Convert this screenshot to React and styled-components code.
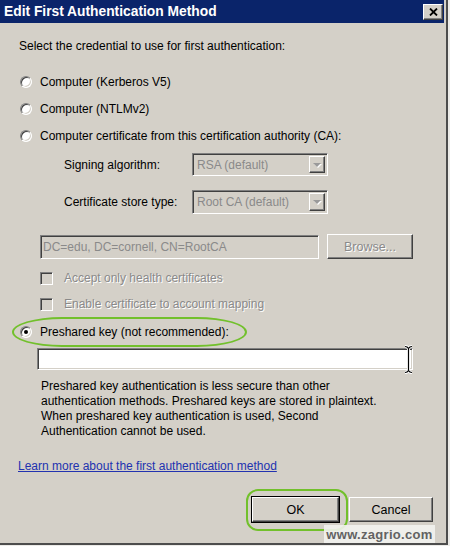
import styled, { createGlobalStyle, css } from "styled-components";

const GlobalStyle = createGlobalStyle`
  html, body {
    margin: 0;
    padding: 0;
    background: #ecebe8;
  }
  body {
    font-family: "Liberation Sans", Arial, sans-serif;
    font-size: 12px;
    color: #000;
  }
`;

const raised = css`
  background: #d4d0c8;
  border: 1px solid;
  border-color: #fff #404040 #404040 #fff;
  box-shadow: inset -1px -1px #808080;
  box-sizing: border-box;
`;

const sunken = css`
  border: 1px solid;
  border-color: #808080 #fff #fff #808080;
  box-shadow: inset 1px 1px #404040, inset -1px -1px #d4d0c8;
  box-sizing: border-box;
`;

const Window = styled.div`
  position: relative;
  width: 448px;
  height: 545px;
  box-sizing: border-box;
  background: #d4d0c8;
  border-right: 2px solid #4d4d4d;
  border-bottom: 2px solid #4d4d4d;
  padding: 0 2px 2px 0;
  display: flex;
  flex-direction: column;
`;

const TitleBar = styled.div`
  height: 23px;
  background: #0a246a;
  display: flex;
  align-items: center;
  justify-content: space-between;
  padding: 0 1px 0 4px;
`;

const Title = styled.span`
  color: #fff;
  font-weight: bold;
  font-size: 13.8px;
`;

const CloseButton = styled.div`
  ${raised};
  width: 20px;
  height: 16px;
  display: grid;
  place-items: center;
`;

const Body = styled.div`
  display: flex;
  flex-direction: column;
`;

const Intro = styled.div`
  margin: 16px 0 0 19px;
  line-height: 15px;
`;

const RadioList = styled.div`
  margin-top: 14px;
  display: flex;
  flex-direction: column;
`;

const RadioRow = styled.label`
  height: ${(p) => (p.$highlight ? "30px" : "27px")};
  display: flex;
  align-items: center;
  gap: 8px;
  box-sizing: border-box;
  ${(p) =>
    p.$highlight
      ? css`
          margin-left: 12px;
          width: 235px;
          padding-left: 6px;
          border: 2px solid #72c02c;
          border-radius: 50px / 15px;
        `
      : css`
          padding-left: 20px;
        `}
`;

const Radio = styled.span`
  position: relative;
  width: 12px;
  height: 12px;
  border-radius: 50%;
  background: #fff;
  ${sunken};
  flex: none;

  ${(p) =>
    p.$checked &&
    css`
      &::after {
        content: "";
        position: absolute;
        left: 3px;
        top: 3px;
        width: 4px;
        height: 4px;
        border-radius: 50%;
        background: #000;
      }
    `}
`;

const SubRow = styled.div`
  display: flex;
  align-items: center;
  padding-left: 64px;
  margin-top: ${(p) => p.$gap}px;
`;

const SubLabel = styled.span`
  width: 128px;
`;

const Select = styled.div`
  ${sunken};
  width: 136px;
  height: ${(p) => p.$h}px;
  background: #d4d0c8;
  display: flex;
  align-items: stretch;
  padding: 2px;
  color: #8a8a8a;
`;

const SelectText = styled.span`
  flex: 1;
  display: flex;
  align-items: center;
  padding-left: 2px;
`;

const ArrowButton = styled.span`
  ${raised};
  width: 16px;
  display: grid;
  place-items: center;

  &::after {
    content: "";
    border-left: 4px solid transparent;
    border-right: 4px solid transparent;
    border-top: 4px solid #9a9a9a;
    filter: drop-shadow(1px 1px 0 #fff);
  }
`;

const DcRow = styled.div`
  display: flex;
  align-items: center;
  margin: 20px 0 0 40px;
  gap: 8px;
`;

const TextField = styled.div`
  ${sunken};
  width: ${(p) => p.$w}px;
  height: ${(p) => p.$h}px;
  background: ${(p) => (p.$disabled ? "#d4d0c8" : "#fff")};
  color: #8a8a8a;
  display: flex;
  align-items: center;
  padding-left: 2px;
  position: relative;
`;

const Button = styled.div`
  ${raised};
  width: ${(p) => p.$w}px;
  height: ${(p) => p.$h}px;
  display: grid;
  place-items: center;
  color: ${(p) => (p.$disabled ? "#8a8a8a" : "#000")};
  text-shadow: ${(p) => (p.$disabled ? "1px 1px 0 #fff" : "none")};
  font-size: 12.5px;
  ${(p) =>
    p.$default &&
    css`
      box-shadow: inset -1px -1px #808080, 0 0 0 1px #000;
    `}
`;

const CheckList = styled.div`
  margin: 6px 0 0 40px;
  display: flex;
  flex-direction: column;
`;

const CheckRow = styled.div`
  height: 26px;
  display: flex;
  align-items: center;
  gap: 11px;
  color: #8a8a8a;
  text-shadow: 1px 1px 0 #fff;
`;

const Checkbox = styled.span`
  ${sunken};
  width: 13px;
  height: 13px;
  background: #d4d0c8;
  flex: none;
`;

const KeyField = styled(TextField)`
  margin: 1px 0 0 37px;
`;

const Cursor = styled.svg`
  position: absolute;
  right: -1px;
  top: -4px;
`;

const Note = styled.p`
  margin: 9px 0 0 41px;
  max-width: 345px;
  line-height: 15px;
`;

const LearnLink = styled.a`
  margin: 20px 0 0 18px;
  line-height: 15px;
  color: #2232b0;
  text-decoration: underline;
  align-self: flex-start;
`;

const ButtonRow = styled.div`
  margin-top: 15px;
  display: flex;
  justify-content: flex-end;
  align-items: flex-start;
  padding-right: 11px;
`;

const Ring = styled.div`
  border: 2px solid #72c02c;
  border-radius: 12px;
  padding: 6px 7px 7px 4px;
`;

const CancelSlot = styled.div`
  margin: 8px 0 0 1px;
`;

const Watermark = styled.div`
  position: absolute;
  right: 11px;
  bottom: 0;
  width: 111px;
  height: 18px;
  background: rgba(242, 242, 238, 0.9);
  color: #626262;
  font-weight: bold;
  font-size: 13px;
  letter-spacing: 0.3px;
  display: grid;
  place-items: center;
`;

const cursorPath =
  "M1 1.5 Q3.5 1.5 4.5 3.5 Q5.5 1.5 8 1.5 M4.5 3.5 L4.5 25.5 M1 27.5 Q3.5 27.5 4.5 25.5 Q5.5 27.5 8 27.5";

function App() {
  return (
    <>
      <GlobalStyle />
      <Window>
        <TitleBar>
          <Title>Edit First Authentication Method</Title>
          <CloseButton>
            <svg width="9" height="8" viewBox="0 0 9 8">
              <path d="M1 0.5 L8 7.5 M8 0.5 L1 7.5" stroke="#000" strokeWidth="1.8" />
            </svg>
          </CloseButton>
        </TitleBar>

        <Body>
          <Intro>Select the credential to use for first authentication:</Intro>

          <RadioList>
            <RadioRow>
              <Radio />
              Computer (Kerberos V5)
            </RadioRow>
            <RadioRow>
              <Radio />
              Computer (NTLMv2)
            </RadioRow>
            <RadioRow>
              <Radio />
              Computer certificate from this certification authority (CA):
            </RadioRow>
          </RadioList>

          <SubRow $gap={4}>
            <SubLabel>Signing algorithm:</SubLabel>
            <Select $h={23}>
              <SelectText>RSA (default)</SelectText>
              <ArrowButton />
            </Select>
          </SubRow>
          <SubRow $gap={14}>
            <SubLabel>Certificate store type:</SubLabel>
            <Select $h={24}>
              <SelectText>Root CA (default)</SelectText>
              <ArrowButton />
            </Select>
          </SubRow>

          <DcRow>
            <TextField $w={279} $h={24} $disabled>
              DC=edu, DC=cornell, CN=RootCA
            </TextField>
            <Button $w={86} $h={25} $disabled>
              Browse...
            </Button>
          </DcRow>

          <CheckList>
            <CheckRow>
              <Checkbox />
              Accept only health certificates
            </CheckRow>
            <CheckRow>
              <Checkbox />
              Enable certificate to account mapping
            </CheckRow>
          </CheckList>

          <RadioRow $highlight>
            <Radio $checked />
            Preshared key (not recommended):
          </RadioRow>

          <KeyField $w={376} $h={22}>
            <Cursor width="9" height="29" viewBox="0 0 9 29">
              <path d={cursorPath} stroke="#fff" strokeWidth="3" fill="none" />
              <path d={cursorPath} stroke="#000" strokeWidth="1.2" fill="none" />
            </Cursor>
          </KeyField>

          <Note>
            Preshared key authentication is less secure than other authentication methods.
            Preshared keys are stored in plaintext. When preshared key authentication is used,
            Second Authentication cannot be used.
          </Note>

          <LearnLink href="#">Learn more about the first authentication method</LearnLink>

          <ButtonRow>
            <Ring>
              <Button $w={87} $h={25} $default>
                OK
              </Button>
            </Ring>
            <CancelSlot>
              <Button $w={84} $h={25}>
                Cancel
              </Button>
            </CancelSlot>
          </ButtonRow>
        </Body>

        <Watermark>www.zagrio.com</Watermark>
      </Window>
    </>
  );
}

export default App;
